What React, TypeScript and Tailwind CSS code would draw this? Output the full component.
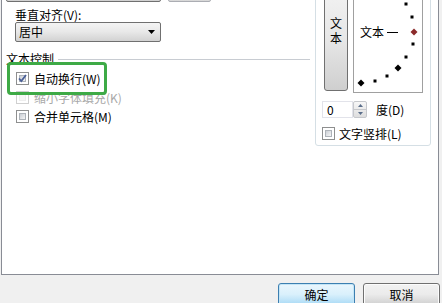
import React from "react";

function CheckBox({ checked = false, disabled = false }: { checked?: boolean; disabled?: boolean }) {
  return (
    <div
      className={
        "relative w-[13px] h-[13px] shrink-0 border p-[2px] bg-white " +
        (disabled ? "border-[#d0d0d0]" : "border-[#8e8f8f]")
      }
    >
      <div
        className={
          "w-full h-full border " +
          (disabled
            ? "border-[#eeeeee] bg-[#f7f7f7]"
            : "border-[#aeb3b9] bg-gradient-to-br from-[#cbcfd5] to-[#f6f6f6]")
        }
      />
      {checked && (
        <svg className="absolute left-0 top-0" width="11" height="11" viewBox="0 0 11 11">
          <path d="M2 5.5 L4.3 8 L9 2" fill="none" stroke="#4a5f97" strokeWidth="1.8" />
        </svg>
      )}
    </div>
  );
}

function Dial() {
  const small: [number, number][] = [
    [52, 12],
    [58, 25],
    [59, 52],
    [52, 65],
    [33, 84],
    [21, 89],
  ];
  const big: [number, number][] = [
    [44, 76],
    [7, 91],
  ];
  return (
    <div className="relative w-[70px] h-[102px] border border-[#a0a0a0] bg-white">
      <svg className="absolute left-0 top-0" width="68" height="100" viewBox="0 0 68 100">
        {small.map(([x, y], i) => (
          <rect key={i} x={x - 1.5} y={y - 1.5} width="3" height="3" fill="#000" />
        ))}
        {big.map(([x, y], i) => (
          <path key={i} d={`M${x} ${y - 3.5} L${x + 3.5} ${y} L${x} ${y + 3.5} L${x - 3.5} ${y} Z`} fill="#000" />
        ))}
        <path d="M60 36.5 L63.5 40 L60 43.5 L56.5 40 Z" fill="#8b2b2b" />
        <line x1="33" y1="40.5" x2="44" y2="40.5" stroke="#000" strokeWidth="1" />
      </svg>
      <span className="absolute left-[6px] top-[33px] leading-[14px] whitespace-nowrap">文本</span>
    </div>
  );
}

export default function App() {
  return (
    <div className="w-[442px] h-[303px] bg-[#f0f0f0] overflow-hidden font-['Noto_Sans_CJK_SC','Noto_Sans',sans-serif] text-[12px] text-black">
      <div className="ml-px w-[438px] h-[275px] bg-white border-l border-r border-b border-[#898c95] flex items-start">
        {/* left column */}
        <div className="relative w-[308px] flex flex-col">
          <div className="flex mt-[-19px] ml-[4px] gap-[7px]">
            <div className="w-[155px] h-[21px] border border-[#707070] rounded-[2px] bg-gradient-to-b from-[#f2f2f2] to-[#d0d0d0]" />
            <div className="w-[43px] h-[21px] border border-[#abadb3] rounded-[2px] bg-gradient-to-b from-[#f2f2f2] to-[#d8d8d8]" />
          </div>
          <div className="mt-[6px] ml-[13px] leading-[14px]">垂直对齐(V):</div>
          <div className="ml-[13px] w-[146px] h-[20px] border border-[#707070] rounded-[2px] bg-gradient-to-b from-[#f4f4f4] via-[#e8e8e8] to-[#d2d2d2] flex items-center justify-between pl-[3px] pr-[5px]">
            <span className="leading-[14px]">居中</span>
            <svg width="7" height="4" viewBox="0 0 7 4">
              <path d="M0 0 L7 0 L3.5 4 Z" fill="#000" />
            </svg>
          </div>
          <div className="mt-[10px] flex items-center h-[14px]">
            <span className="ml-[4px] leading-[14px]">文本控制</span>
            <div className="ml-[4px] flex-1 h-px bg-[#c8ccd2]" />
          </div>
          <div className="mt-[3px] flex flex-col">
            <div className="h-[19px] flex items-center ml-[14px] gap-[5px]">
              <CheckBox checked />
              <span className="leading-[14px]">自动换行(W)</span>
            </div>
            <div className="h-[19px] flex items-center ml-[14px] gap-[5px]">
              <CheckBox disabled />
              <span className="leading-[14px] text-[#a8a8a8]">缩小字体填充(K)</span>
            </div>
            <div className="h-[19px] flex items-center ml-[14px] gap-[5px]">
              <CheckBox />
              <span className="leading-[14px]">合并单元格(M)</span>
            </div>
          </div>
          <div className="absolute left-[5px] top-[62px] w-[100px] h-[33px] border-[3px] border-[#3eaa46] rounded-[4px]" />
        </div>

        {/* right group */}
        <div className="ml-[5px] mt-[-10px] w-[116px] h-[156px] border border-[#d5dfe5] rounded-[3px] flex flex-col">
          <div className="flex items-start pl-[8px] gap-[5px]">
            <div className="w-[24px] h-[100px] border border-[#707070] rounded-b-[3px] bg-gradient-to-b from-[#f2f2f2] via-[#e6e6e6] to-[#cfcfcf] flex flex-col items-center pt-[23px]">
              <span className="block w-[12px] leading-[15px] break-all text-center">文本</span>
            </div>
            <Dial />
          </div>
          <div className="mt-[8px] ml-[6px] flex items-center h-[17px]">
            <div className="w-[31px] h-[17px] border border-[#e2e3ea] flex items-center pl-[4px] leading-[14px]">0</div>
            <div className="w-[14px] h-[17px] flex flex-col border border-[#c6c8cc] rounded-[2px] bg-gradient-to-b from-[#f7f7f7] to-[#dedede]">
              <div className="flex-1 flex items-center justify-center border-b border-[#c6c8cc]">
                <svg width="5" height="3" viewBox="0 0 5 3"><path d="M0 3 L5 3 L2.5 0 Z" fill="#5a6e8a" /></svg>
              </div>
              <div className="flex-1 flex items-center justify-center">
                <svg width="5" height="3" viewBox="0 0 5 3"><path d="M0 0 L5 0 L2.5 3 Z" fill="#5a6e8a" /></svg>
              </div>
            </div>
            <span className="ml-[9px] leading-[14px]">度(D)</span>
          </div>
          <div className="mt-[6px] ml-[6px] h-[19px] flex items-center gap-[4px]">
            <CheckBox />
            <span className="leading-[14px]">文字竖排(L)</span>
          </div>
        </div>
      </div>

      {/* bottom buttons */}
      <div className="mt-[8px] flex justify-end pr-[2px] gap-[8px]">
        <div className="w-[77px] h-[23px] rounded-[3px] border border-[#3c7fb1] bg-gradient-to-b from-[#eaf6fd] via-[#d9f0fc] to-[#a7d9f5] shadow-[inset_0_0_0_1px_#c4e5f6] flex items-center justify-center leading-[14px]">
          确定
        </div>
        <div className="w-[77px] h-[23px] rounded-[3px] border border-[#707070] bg-gradient-to-b from-[#f2f2f2] via-[#ebebeb] to-[#cfcfcf] shadow-[inset_0_0_0_1px_#fcfcfc] flex items-center justify-center leading-[14px]">
          取消
        </div>
      </div>
    </div>
  );
}
